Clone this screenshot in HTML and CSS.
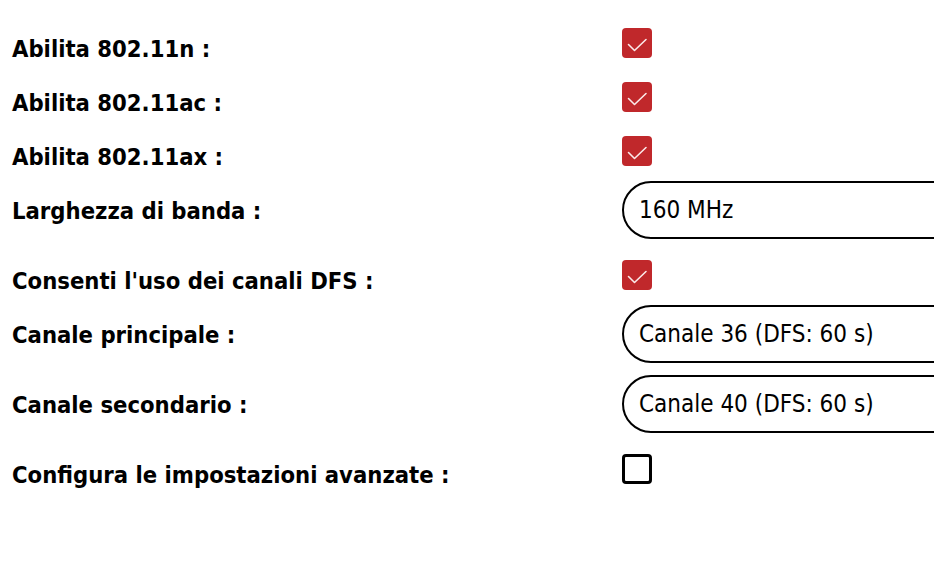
FILE: index.html
```html
<!DOCTYPE html>
<html lang="it">
<head>
<meta charset="utf-8">
<title>Impostazioni wireless</title>
<link rel="stylesheet" href="styles.css">
</head>
<body>
<form class="settings">
  <div class="row row-check">
    <div class="label">Abilita 802.11n :</div>
    <div class="control"><span class="checkbox checked"><svg viewBox="0 0 30 30" width="30" height="30"><polyline points="6.5,16.5 12.5,22.5 24,11.5" /></svg></span></div>
  </div>
  <div class="row row-check">
    <div class="label">Abilita 802.11ac :</div>
    <div class="control"><span class="checkbox checked"><svg viewBox="0 0 30 30" width="30" height="30"><polyline points="6.5,16.5 12.5,22.5 24,11.5" /></svg></span></div>
  </div>
  <div class="row row-check">
    <div class="label">Abilita 802.11ax :</div>
    <div class="control"><span class="checkbox checked"><svg viewBox="0 0 30 30" width="30" height="30"><polyline points="6.5,16.5 12.5,22.5 24,11.5" /></svg></span></div>
  </div>
  <div class="row row-select">
    <div class="label">Larghezza di banda :</div>
    <div class="control"><div class="select">160 MHz</div></div>
  </div>
  <div class="row row-check">
    <div class="label">Consenti l'uso dei canali DFS :</div>
    <div class="control"><span class="checkbox checked"><svg viewBox="0 0 30 30" width="30" height="30"><polyline points="6.5,16.5 12.5,22.5 24,11.5" /></svg></span></div>
  </div>
  <div class="row row-select">
    <div class="label">Canale principale :</div>
    <div class="control"><div class="select">Canale 36 (DFS: 60 s)</div></div>
  </div>
  <div class="row row-select">
    <div class="label">Canale secondario :</div>
    <div class="control"><div class="select">Canale 40 (DFS: 60 s)</div></div>
  </div>
  <div class="row row-check">
    <div class="label">Configura le impostazioni avanzate :</div>
    <div class="control"><span class="checkbox"></span></div>
  </div>
</form>
</body>
</html>
```

FILE: styles.css
```css
html, body {
  margin: 0;
  padding: 0;
  background: #ffffff;
  overflow: hidden;
}

body {
  font-family: "DejaVu Sans Condensed", "DejaVu Sans", sans-serif;
  font-size: 24px;
  color: #000000;
}

.settings {
  display: flex;
  flex-direction: column;
  padding: 19px 0 0 12px;
}

.row {
  display: flex;
  align-items: flex-start;
}

.row-check {
  height: 54px;
}

.row-select {
  height: 70px;
}

.label {
  width: 610px;
  flex: none;
  padding-top: 17px;
  font-size: 23.6px;
  line-height: 27px;
  font-weight: bold;
  white-space: nowrap;
}

.control {
  flex: 1;
  min-width: 0;
}

.row-check .control {
  padding-top: 9px;
}

.checkbox {
  display: block;
  box-sizing: border-box;
  width: 30px;
  height: 30px;
  border: 3px solid #000000;
  border-radius: 4px;
  background: #ffffff;
}

.checkbox.checked {
  border: none;
  background: #c0282b;
}

.checkbox svg {
  display: block;
}

.checkbox polyline {
  fill: none;
  stroke: #fbe9e9;
  stroke-width: 1.6;
  stroke-linecap: round;
  stroke-linejoin: round;
}

.select {
  box-sizing: border-box;
  width: 420px;
  height: 58px;
  border: 2px solid #000000;
  border-radius: 29px;
  display: flex;
  align-items: center;
  padding-left: 15px;
  line-height: 27px;
  white-space: nowrap;
}
```
